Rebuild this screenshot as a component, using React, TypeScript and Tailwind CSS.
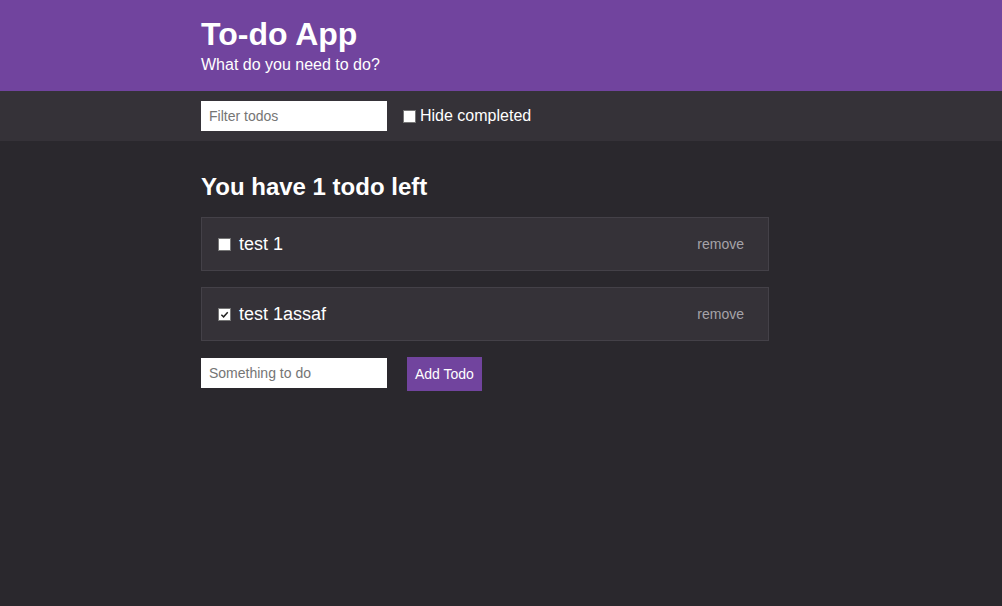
import { useState } from 'react';

type Todo = { id: number; text: string; done: boolean };

const Box = ({ checked, onChange }: { checked: boolean; onChange: () => void }) => (
  <button
    type="button"
    onClick={onChange}
    className="w-[13px] h-[13px] bg-white border border-[#767676] flex items-center justify-center shrink-0"
  >
    {checked && (
      <svg viewBox="0 0 10 10" className="w-[9px] h-[9px]">
        <path d="M1.5 5.2 L4 7.6 L8.6 2.4" fill="none" stroke="#222" strokeWidth="1.6" />
      </svg>
    )}
  </button>
);

const App = () => {
  const [todos, setTodos] = useState<Todo[]>([
    { id: 1, text: 'test 1', done: false },
    { id: 2, text: 'test 1assaf', done: true },
  ]);
  const [hide, setHide] = useState(false);
  const left = todos.filter((t) => !t.done).length;

  return (
    <div className="min-h-screen bg-[#2a282d] text-white font-['Liberation_Sans',Arial,sans-serif]">
      <header className="bg-[#71449e] h-[91px]">
        <div className="w-[568px] ml-[201px] pt-[15px]">
          <h1 className="text-[32px] font-bold leading-[38px]">To-do App</h1>
          <p className="text-[16px] leading-[20px] mt-[2px]">What do you need to do?</p>
        </div>
      </header>
      <div className="bg-[#353238] h-[50px]">
        <div className="ml-[201px] flex items-center h-full gap-4">
          <input
            className="w-[186px] h-[30px] bg-white text-[#333] px-2 text-[14px] outline-none placeholder:text-[#757575]"
            placeholder="Filter todos"
          />
          <label className="flex items-center gap-[4px] text-[16px]">
            <Box checked={hide} onChange={() => setHide(!hide)} />
            Hide completed
          </label>
        </div>
      </div>
      <main className="ml-[201px] w-[568px] pt-[32px]">
        <h2 className="text-[24px] font-bold leading-[28px]">
          You have {left} todo{left === 1 ? '' : 's'} left
        </h2>
        <div className="mt-[16px] flex flex-col gap-4">
          {todos
            .filter((t) => !(hide && t.done))
            .map((t) => (
              <div
                key={t.id}
                className="h-[54px] bg-[#353238] border border-[#444148] flex items-center pl-[16px] pr-[24px]"
              >
                <Box
                  checked={t.done}
                  onChange={() =>
                    setTodos(todos.map((x) => (x.id === t.id ? { ...x, done: !x.done } : x)))
                  }
                />
                <span className="ml-[8px] text-[18px]">{t.text}</span>
                <button
                  className="ml-auto text-[14px] text-[#a5a3a8]"
                  onClick={() => setTodos(todos.filter((x) => x.id !== t.id))}
                >
                  remove
                </button>
              </div>
            ))}
        </div>
        <form className="mt-[16px] flex items-start gap-5" onSubmit={(e) => e.preventDefault()}>
          <input
            className="mt-[1px] w-[186px] h-[30px] bg-white text-[#333] px-2 text-[14px] outline-none placeholder:text-[#757575]"
            placeholder="Something to do"
          />
          <button className="h-[34px] px-[8px] bg-[#71449e] text-[14px]" type="submit">
            Add Todo
          </button>
        </form>
      </main>
    </div>
  );
};

export default App;
